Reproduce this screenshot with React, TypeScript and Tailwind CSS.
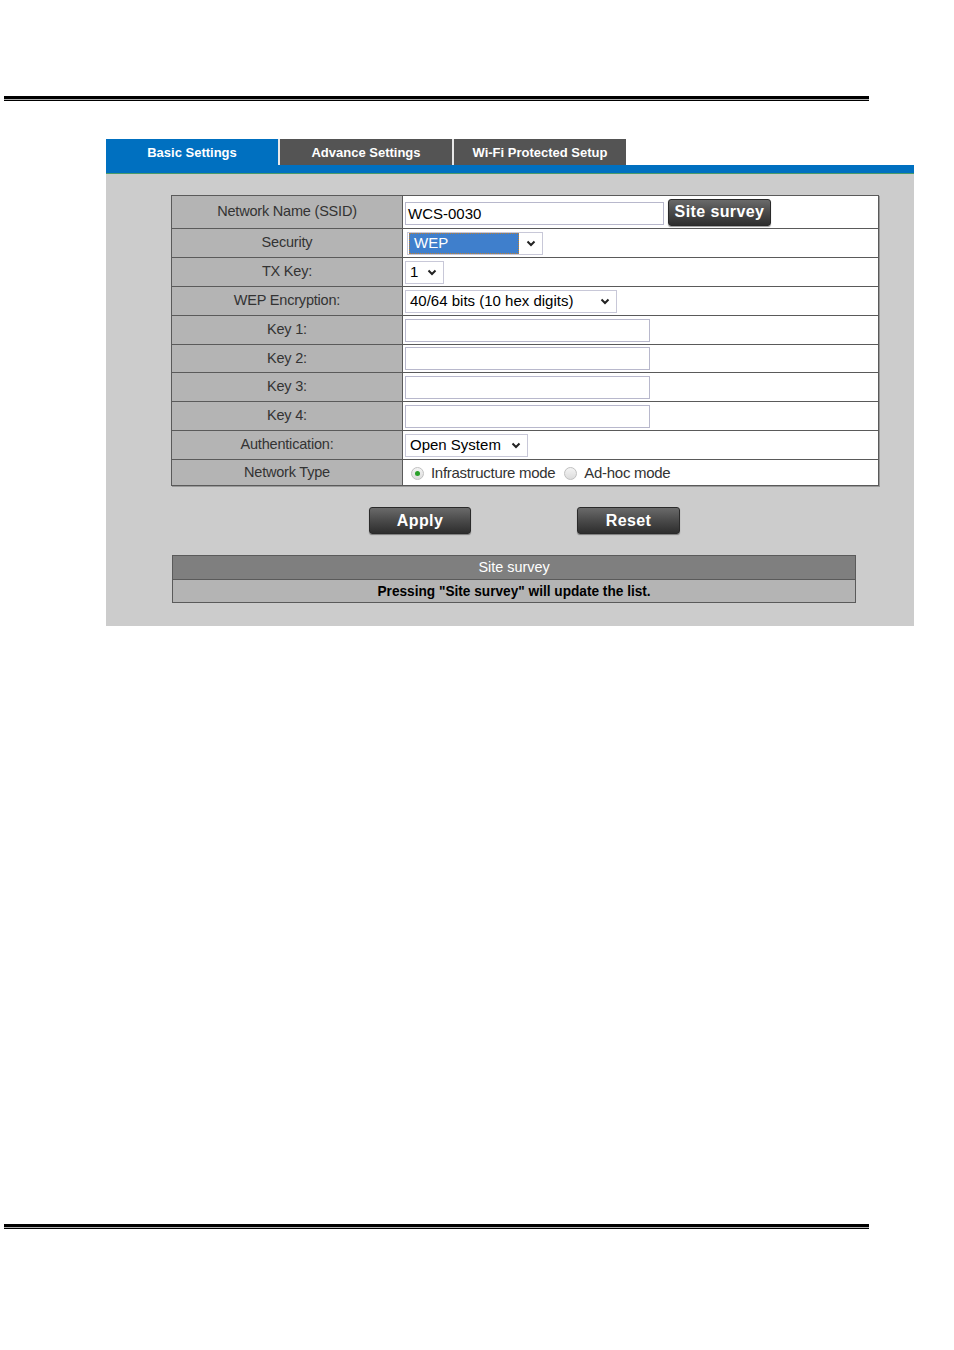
import { ReactNode } from "react";

function DoubleRule() {
  return (
    <div className="ml-[4px] w-[865px]">
      <div className="h-[3px] bg-black" />
      <div className="h-[1px] bg-[#b0b0b0]" />
      <div className="h-[1px] bg-black" />
    </div>
  );
}

function Chevron() {
  return (
    <svg width="10" height="7" viewBox="0 0 10 7" className="shrink-0">
      <path d="M1.5 1.5 L5 5 L8.5 1.5" fill="none" stroke="#222" strokeWidth="2" />
    </svg>
  );
}

function FakeSelect({ text, width, highlight }: { text: string; width: string; highlight?: boolean }) {
  return (
    <div
      className={`flex items-center h-[23px] border border-[#c8c8d8] bg-white pr-[6px] ${width}`}
    >
      <div
        className={`flex-1 h-full flex items-center pl-[4px] pt-[1px] text-[15px] ${
          highlight ? "bg-[#3f7fcc] text-white mx-[1px] my-[1px] h-[19px] border border-dotted border-[#c08030]" : "text-black"
        }`}
      >
        {text}
      </div>
      <div className="pl-[6px]">
        <Chevron />
      </div>
    </div>
  );
}

function TextBox({ value, width }: { value?: string; width: string }) {
  return (
    <div className={`h-[23px] border border-[#b8b8cc] bg-white flex items-center pl-[2px] pt-[2px] text-[15px] text-black ${width}`}>
      {value}
    </div>
  );
}

function DarkButton({ label, width, size }: { label: string; width: string; size: string }) {
  return (
    <div
      className={`h-[27px] ${width} rounded-[3px] border border-[#2a2a2a] bg-gradient-to-b from-[#6a6a6a] via-[#4a4a4a] to-[#2e2e2e] flex items-center justify-center text-white font-bold tracking-[0.4px] ${size} shadow-[0_1px_1px_rgba(0,0,0,0.4)]`}
    >
      {label}
    </div>
  );
}

function Row({ label, h, children }: { label: string; h: string; children: ReactNode }) {
  return (
    <div className={`flex ${h} border-t border-[#5a5a5a] first:border-t-0`}>
      <div className="w-[231px] bg-[#b4b4b4] border-r border-[#5a5a5a] flex items-center justify-center text-[14.5px] text-[#333] tracking-[-0.2px]">
        {label}
      </div>
      <div className="flex-1 bg-white flex items-center pl-[2px]">{children}</div>
    </div>
  );
}

function Radio({ checked }: { checked?: boolean }) {
  return (
    <span className="inline-flex w-[13px] h-[13px] rounded-full border border-[#c0c0c0] bg-gradient-to-b from-[#f4f4f4] to-[#dcdcdc] items-center justify-center">
      {checked && <span className="w-[5px] h-[5px] rounded-full bg-[#2aa02a]" />}
    </span>
  );
}

export default function App() {
  return (
    <div className="w-[954px] h-[1350px] bg-white relative font-['Liberation_Sans',Arial,sans-serif]">
      <div className="pt-[96px]">
        <DoubleRule />
      </div>

      <div className="ml-[106px] mt-[38px] w-[808px]">
        {/* tabs */}
        <div className="flex h-[26px] text-[13px] font-bold text-white">
          <div className="w-[172px] bg-[#0070c0] flex items-center justify-center pt-[1px]">Basic Settings</div>
          <div className="w-[2px] bg-[#e8e8e8]" />
          <div className="w-[172px] bg-[#545454] flex items-center justify-center pt-[1px]">Advance Settings</div>
          <div className="w-[2px] bg-[#e8e8e8]" />
          <div className="w-[172px] bg-[#545454] flex items-center justify-center pt-[1px]">Wi-Fi Protected Setup</div>
        </div>
        <div className="h-[9px] bg-[#0070c0] border-b border-[#4a9a6a]" />

        <div className="bg-[#cccccc] h-[452px] pt-[21px]">
          <div className="ml-[65px] w-[708px] border border-[#5a5a5a] shadow-[1px_1px_0_#999]">
            <Row label="Network Name (SSID)" h="h-[32px]">
              <div className="pt-[3px]">
                <TextBox value="WCS-0030" width="w-[259px]" />
              </div>
              <div className="ml-[4px]">
                <DarkButton label="Site survey" width="w-[103px]" size="text-[16px]" />
              </div>
            </Row>
            <Row label="Security" h="h-[29px]">
              <div className="pl-[2px]">
                <FakeSelect text="WEP" width="w-[136px]" highlight />
              </div>
            </Row>
            <Row label="TX Key:" h="h-[29px]">
              <FakeSelect text="1" width="w-[39px]" />
            </Row>
            <Row label="WEP Encryption:" h="h-[29px]">
              <FakeSelect text="40/64 bits (10 hex digits)" width="w-[212px]" />
            </Row>
            <Row label="Key 1:" h="h-[29px]">
              <TextBox width="w-[245px]" />
            </Row>
            <Row label="Key 2:" h="h-[28px]">
              <TextBox width="w-[245px]" />
            </Row>
            <Row label="Key 3:" h="h-[29px]">
              <TextBox width="w-[245px]" />
            </Row>
            <Row label="Key 4:" h="h-[29px]">
              <TextBox width="w-[245px]" />
            </Row>
            <Row label="Authentication:" h="h-[29px]">
              <FakeSelect text="Open System" width="w-[123px]" />
            </Row>
            <Row label="Network Type" h="h-[26px]">
              <div className="flex items-center pl-[6px] pt-[2px] text-[15px] text-[#333] tracking-[-0.3px]">
                <Radio checked />
                <span className="ml-[7px]">Infrastructure mode</span>
                <span className="ml-[9px]" />
                <Radio />
                <span className="ml-[7px]">Ad-hoc mode</span>
              </div>
            </Row>
          </div>

          <div className="flex mt-[21px] ml-[263px] gap-[106px]">
            <DarkButton label="Apply" width="w-[102px]" size="text-[16px]" />
            <DarkButton label="Reset" width="w-[103px]" size="text-[16px]" />
          </div>

          <div className="ml-[66px] mt-[21px] w-[684px] border border-[#5a5a5a]">
            <div className="h-[23px] bg-[#7f7f7f] flex items-center justify-center text-[15px] text-white">
              <span className="inline-block scale-x-[0.96]">Site survey</span>
            </div>
            <div className="h-[23px] border-t border-[#5a5a5a] bg-[#b4b4b4] flex items-center justify-center text-[15px] font-bold text-black">
              <span className="inline-block scale-x-[0.91] whitespace-nowrap">Pressing "Site survey" will update the list.</span>
            </div>
          </div>
        </div>
      </div>

      <div className="absolute left-0 top-[1224px] w-full">
        <DoubleRule />
      </div>
    </div>
  );
}
